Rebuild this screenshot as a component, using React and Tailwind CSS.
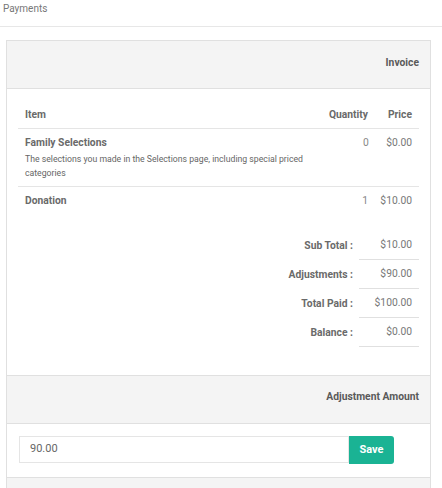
export default function App() {
  const totals = [
    ["Sub Total :", "$10.00"],
    ["Adjustments :", "$90.00"],
    ["Total Paid :", "$100.00"],
    ["Balance :", "$0.00"],
  ];
  return (
    <div className="w-[442px] h-[488px] overflow-hidden bg-white text-[#676a6c]" style={{ fontFamily: "Roboto, 'Liberation Sans', sans-serif" }}>
      <div className="h-[27px] border-b border-[#e7e7e7] pl-[3px] pt-[2px] text-[10px] leading-[14px] text-[#777]">Payments</div>
      <div className="mt-[13px] ml-[6px] w-[425px] border-x border-t border-[#e0e0e0]">
        <div className="h-[48px] bg-[#f4f4f4] border-b border-[#e0e0e0] pt-[15px] pr-[11px] text-right text-[10.3px] leading-[14px] font-bold text-[#5a5a5a]">Invoice</div>
        <div className="px-[11px] pt-[12px] pb-[28px]">
          <div className="flex items-center h-[28px] border-b border-[#e5e5e5] text-[10.3px] font-bold text-[#6a6a6a]">
            <div className="flex-1 pl-[7px]">Item</div>
            <div className="w-[60px] text-right pr-[7px]">Quantity</div>
            <div className="w-[44px] text-right pr-[7px]">Price</div>
          </div>
          <div className="flex border-b border-[#e5e5e5] pt-[7px] pb-[6px]">
            <div className="flex-1 pl-[7px]">
              <div className="text-[10.3px] font-bold leading-[14px] mb-[2px] text-[#6a6a6a]">Family Selections</div>
              <div className="text-[8.7px] leading-[14px] text-[#666] w-[292px]">The selections you made in the Selections page, including special priced categories</div>
            </div>
            <div className="w-[60px] text-right pr-[7px] text-[10.3px] leading-[14px] text-[#888]">0</div>
            <div className="w-[44px] text-right pr-[7px] text-[10.3px] leading-[14px] text-[#777]">$0.00</div>
          </div>
          <div className="flex items-center h-[27px] text-[10.3px]">
            <div className="flex-1 pl-[7px] font-bold text-[#6a6a6a]">Donation</div>
            <div className="w-[60px] text-right pr-[7px] text-[#888]">1</div>
            <div className="w-[44px] text-right pr-[7px] text-[#777]">$10.00</div>
          </div>
          <div className="mt-[17px] flex flex-col items-end">
            {totals.map(([l, v]) => (
              <div key={l} className="flex h-[29px] text-[10.3px]">
                <div className="flex items-center justify-end pr-[6px] font-bold text-[#6a6a6a]">{l}</div>
                <div className="w-[60px] border-b border-[#e0e0e0] flex items-center justify-end pr-[7px] text-[#777]">{v}</div>
              </div>
            ))}
          </div>
        </div>
        <div className="h-[49px] bg-[#f4f4f4] border-y border-[#e0e0e0] pt-[14px] pr-[11px] text-right text-[10.3px] leading-[14px] font-bold text-[#5a5a5a]">Adjustment Amount</div>
        <div className="h-[53px] pl-[12px] pt-[12px] flex items-start">
          <div className="w-[330px] h-[27px] border border-[#e5e5e5] flex items-center pl-[10px] text-[11px] text-[#666]">90.00</div>
          <button className="w-[45px] h-[28px] bg-[#1ab394] rounded-r-[3px] text-white text-[11px] font-bold">Save</button>
        </div>
        <div className="h-[20px] bg-[#f4f4f4] border-t border-[#e0e0e0]"></div>
      </div>
    </div>
  );
}
